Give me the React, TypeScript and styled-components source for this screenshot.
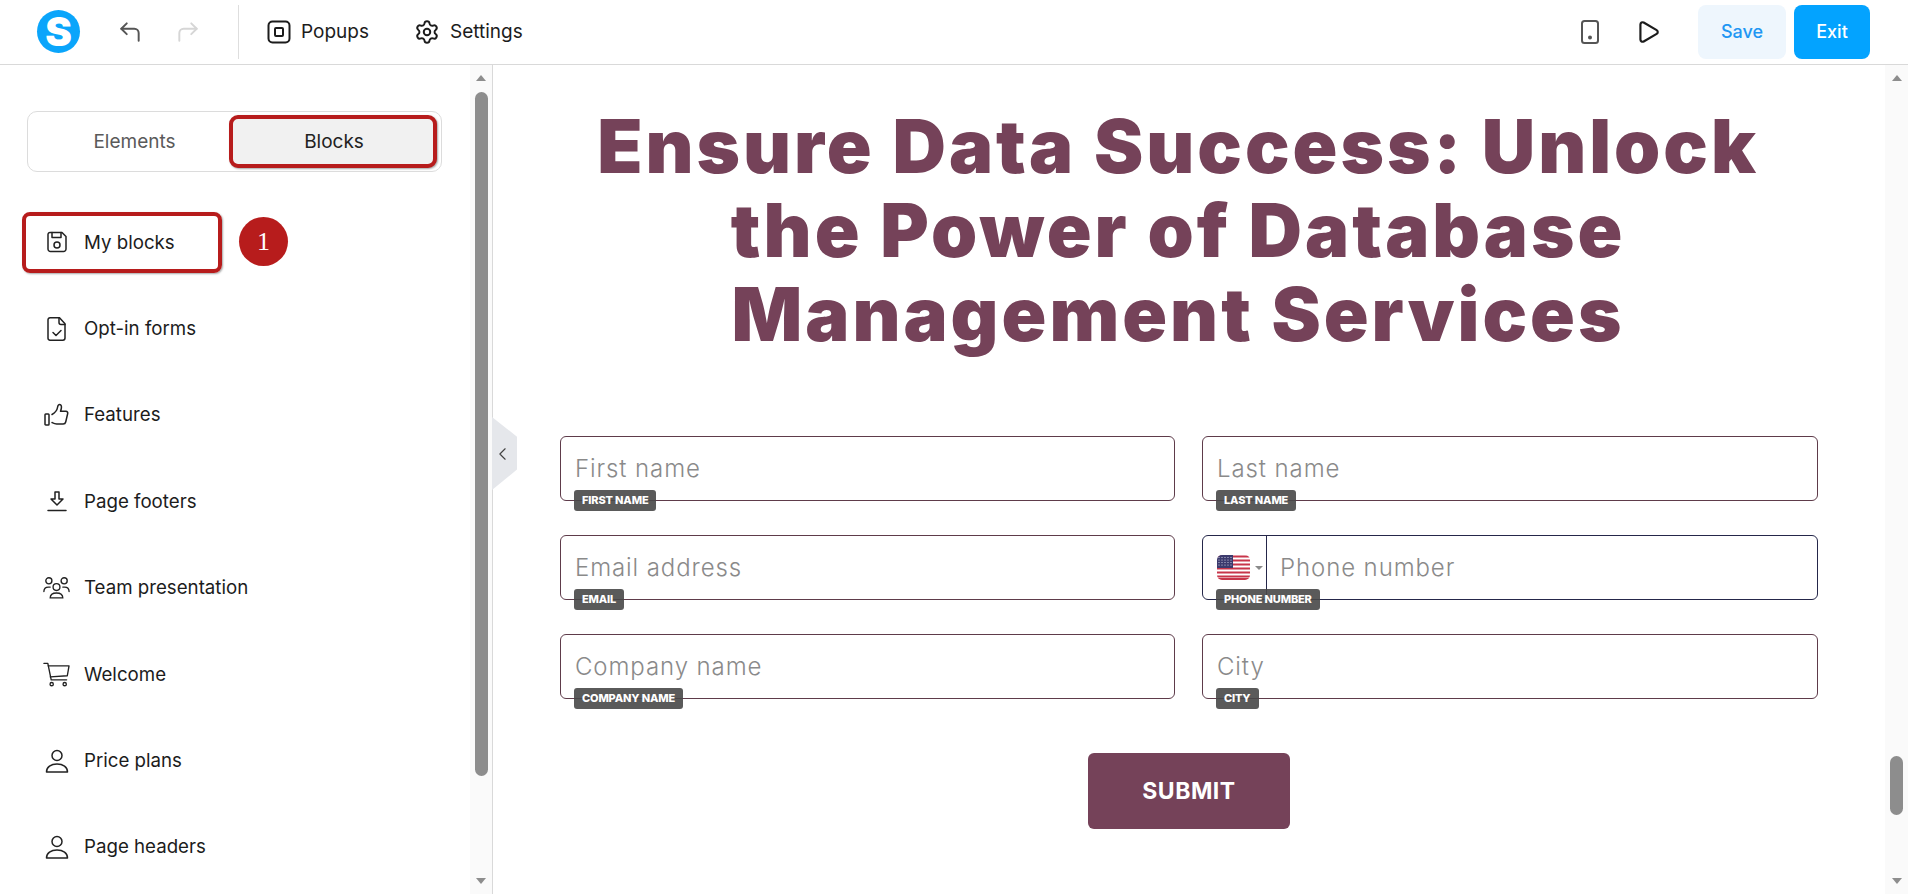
import React from "react";
import styled, { createGlobalStyle } from "styled-components";
import { CornerUpLeft, CornerUpRight, Play, Settings, ChevronLeft } from "lucide-react";

const Global = createGlobalStyle`
  html, body { margin: 0; padding: 0; height: 100%; background: #fff; overflow: hidden; }
  * { box-sizing: border-box; }
  body { font-family: Inter, "Liberation Sans", sans-serif; color: #1c1c1c; }
`;

const Page = styled.div`
  width: 1908px;
  height: 894px;
  display: flex;
  flex-direction: column;
`;

const Topbar = styled.header`
  height: 65px;
  flex: none;
  display: flex;
  align-items: center;
  border-bottom: 1px solid #d9d9d9;
  padding: 0 38px 1px 37px;
`;

const Logo = styled.div`
  width: 43px;
  height: 43px;
  border-radius: 50%;
  background: #0aa5fb;
  color: #fff;
  font-size: 40px;
  font-weight: 900;
  display: flex;
  align-items: center;
  justify-content: center;
  margin-right: 37px;
`;

const HistoryButton = styled.span<{ $off?: boolean }>`
  display: flex;
  width: 28px;
  margin-right: 30px;
  color: ${({ $off }) => ($off ? "#d6d6d6" : "#555")};
`;

const Divider = styled.span`
  width: 1px;
  height: 54px;
  background: #dedede;
  margin: 0 28px 0 5px;
`;

const NavItem = styled.span`
  display: flex;
  align-items: center;
  gap: 10px;
  font-size: 19px;
  font-weight: 400;
  margin-right: 45px;
`;

const Spacer = styled.span`
  flex: 1;
`;

const ToolIcon = styled.span<{ $gap: number }>`
  display: flex;
  margin-right: ${({ $gap }) => $gap}px;
`;

const TopButton = styled.button<{ $primary?: boolean }>`
  height: 54px;
  width: ${({ $primary }) => ($primary ? "76px" : "88px")};
  margin-left: ${({ $primary }) => ($primary ? "8px" : "0")};
  border: 0;
  border-radius: 8px;
  font: 500 18px Inter, sans-serif;
  background: ${({ $primary }) => ($primary ? "#03a3ff" : "#eef6fd")};
  color: ${({ $primary }) => ($primary ? "#fff" : "#2196f3")};
`;

const Body = styled.div`
  flex: 1;
  display: flex;
  min-height: 0;
`;

const Sidebar = styled.aside`
  width: 493px;
  flex: none;
  display: flex;
  border-right: 1px solid #d9d9d9;
  position: relative;
`;

const SidebarContent = styled.div`
  flex: 1;
  min-width: 0;
  padding: 46px 0 0 27px;
  overflow: hidden;
`;

const Tabs = styled.div`
  width: 415px;
  height: 61px;
  border: 1px solid #dcdcdc;
  border-radius: 10px;
  display: flex;
  align-items: center;
  padding: 0 4px 0 12px;
`;

const Tab = styled.div<{ $active?: boolean }>`
  height: 53px;
  display: flex;
  align-items: center;
  justify-content: center;
  font-size: 19px;
  ${({ $active }) =>
    $active
      ? "width: 208px; padding-left: 2px; background: #f1f1f1; border: 4px solid #b71c1c; border-radius: 9px; color: #222; box-shadow: 1px 1px 2px rgba(0, 0, 0, 0.35);"
      : "flex: 1; color: #5a5a5a;"}
`;

const BlockList = styled.ul`
  list-style: none;
  margin: 27px 0 0;
  padding: 0;
`;

const BlockItem = styled.li`
  height: 86.4px;
  display: flex;
  align-items: center;
  gap: 14px;
  padding-left: 16px;
  font-size: 18.7px;
  position: relative;
`;

const BlockIcon = styled.span`
  width: 27px;
  height: 28px;
  display: flex;
  align-items: center;
  justify-content: center;
  flex: none;
`;

const Annotation = styled.span`
  position: absolute;
  left: -5px;
  top: 13px;
  width: 200px;
  height: 61px;
  border: 4px solid #b71c1c;
  border-radius: 8px;
  box-shadow: 1px 1px 2px rgba(0, 0, 0, 0.35);
`;

const StepBadge = styled.span`
  position: absolute;
  left: 212px;
  top: 18px;
  width: 49px;
  height: 49px;
  border-radius: 50%;
  background: #b71c1c;
  color: #fff;
  font: 26px "Liberation Serif", serif;
  display: flex;
  align-items: center;
  justify-content: center;
`;

const ScrollTrack = styled.div<{ $width: number }>`
  width: ${({ $width }) => $width}px;
  flex: none;
  background: #fafafa;
  display: flex;
  flex-direction: column;
  align-items: center;
`;

const ScrollArrow = styled.span<{ $down?: boolean }>`
  width: 0;
  height: 0;
  flex: none;
  border-left: 5px solid transparent;
  border-right: 5px solid transparent;
  margin: ${({ $down }) => ($down ? "0 0 10px" : "10px 0 0")};
  ${({ $down }) =>
    $down ? "border-top: 6px solid #8d8d8d;" : "border-bottom: 6px solid #8d8d8d;"}
`;

const ScrollThumb = styled.span<{ $top: number; $height: number }>`
  width: 13px;
  height: ${({ $height }) => $height}px;
  margin-top: ${({ $top }) => $top}px;
  margin-bottom: auto;
  border-radius: 7px;
  background: #8d8d8d;
`;

const CollapseHandle = styled.div`
  position: absolute;
  left: 492px;
  top: 352px;
  width: 25px;
  height: 73px;
  background: #e5e7eb;
  clip-path: polygon(0 0, 100% 27%, 100% 72%, 0 100%);
  display: flex;
  align-items: center;
  justify-content: center;
  padding-right: 4px;
  color: #444;
  z-index: 2;
`;

const Canvas = styled.main`
  flex: 1;
  min-width: 0;
  padding: 39px 67px 0;
  overflow: hidden;
`;

const Headline = styled.h1`
  margin: 0 22px 0 0;
  font-size: 74px;
  font-weight: 900;
  line-height: 84px;
  text-align: center;
  color: #754259;
  letter-spacing: 3px;
  white-space: nowrap;
`;

const FormGrid = styled.form`
  margin-top: 80px;
  display: grid;
  grid-template-columns: 615px 616px;
  column-gap: 27px;
  row-gap: 34px;
`;

const Field = styled.div<{ $phone?: boolean }>`
  height: 65px;
  border: 1px solid ${({ $phone }) => ($phone ? "#25274a" : "#5e3b4a")};
  border-radius: 6px;
  display: flex;
  align-items: center;
  position: relative;
`;

const Placeholder = styled.span<{ $phone?: boolean }>`
  margin-left: ${({ $phone }) => ($phone ? "13px" : "14px")};
  font-size: 24px;
  font-weight: 300;
  letter-spacing: 0.9px;
  color: #8a8a8a;
`;

const FieldLabel = styled.span`
  position: absolute;
  left: 13px;
  bottom: -11px;
  height: 21px;
  padding: 0 8px;
  border-radius: 3px;
  background: rgba(72, 72, 72, 0.9);
  color: #fff;
  font-size: 11px;
  font-weight: 800;
  line-height: 21px;
  letter-spacing: -0.15px;
  white-space: nowrap;
`;

const CountryPicker = styled.span`
  width: 64px;
  align-self: stretch;
  flex: none;
  border-right: 1px solid #25274a;
  display: flex;
  align-items: center;
  gap: 5px;
  padding-left: 14px;
`;

const Caret = styled.span`
  width: 0;
  height: 0;
  border-left: 4px solid transparent;
  border-right: 4px solid transparent;
  border-top: 4px solid #8a8a8a;
`;

const SubmitRow = styled.div`
  margin-top: 54px;
  display: flex;
  justify-content: center;
`;

const SubmitButton = styled.button`
  width: 202px;
  height: 76px;
  border: 0;
  border-radius: 6px;
  background: #754259;
  color: #fff;
  font: 700 23px Inter, sans-serif;
  letter-spacing: 0.5px;
`;

const icon = {
  width: 24,
  height: 24,
  viewBox: "0 0 24 24",
  fill: "none",
  stroke: "#222",
  strokeWidth: 1.5,
  strokeLinecap: "round" as const,
  strokeLinejoin: "round" as const,
};

const FloppyIcon = () => (
  <svg {...icon}>
    <path d="M5 2.5h12l4 4V19a2.5 2.5 0 0 1-2.5 2.5h-13A2.5 2.5 0 0 1 3 19V4.5a2 2 0 0 1 2-2Z" />
    <path d="M7 2.5v5h9v-5" />
    <circle cx="12" cy="15" r="3" />
  </svg>
);

const FormIcon = () => (
  <svg {...icon}>
    <path d="M5 .8h9.5l5.5 6V21a2.2 2.2 0 0 1-2.2 2.2H5A2 2 0 0 1 3 21V2.8a2 2 0 0 1 2-2Z" />
    <path d="M14 1v4.5a2 2 0 0 0 2 2h4" />
    <path d="m8 15.5 3 3 5-5" />
  </svg>
);

const ThumbIcon = () => (
  <svg width="25" height="23" viewBox="0 0 25 23" fill="none" stroke="#222" strokeWidth="1.5" strokeLinecap="round" strokeLinejoin="round">
    <rect x="1" y="11" width="4" height="11" rx="0.8" />
    <path d="M8 11.5c2.5-1.5 5-3.5 5.5-7 .2-1.5.8-3 2.2-3 1.6 0 2 2 1.6 4-.2 1-.5 2-.8 2.8h5.5c1.2 0 2 1 1.7 2.2l-2 8.5c-.3 1.300-1.300 2-2.500 2h-6.500c-2 0-3.200-.7-4.700-1.500" />
  </svg>
);

const DownloadIcon = () => (
  <svg {...icon}>
    <path d="M10 3h4v7h4l-6 6-6-6h4V3Z" />
    <path d="M3 21.5h18" />
  </svg>
);

const TeamIcon = () => (
  <svg width="31" height="26" viewBox="0 0 30 26" fill="none" stroke="#222" strokeWidth="1.5" strokeLinecap="round">
    <circle cx="6.5" cy="5" r="3.4" />
    <circle cx="23.5" cy="5" r="3.4" />
    <circle cx="15" cy="12" r="3.8" />
    <path d="M1 17c0-3 2-5 5-5h2" />
    <path d="M29 17c0-3-2-5-5-5h-2" />
    <path d="M8 24c0-3.5 3-5.5 7-5.5s7 2 7 5.5Z" />
  </svg>
);

const CartIcon = () => (
  <svg width="28" height="25" viewBox="0 0 28 25" fill="none" stroke="#222" strokeWidth="1.4" strokeLinecap="round" strokeLinejoin="round">
    <path d="M1 1h4l3.5 17h16" />
    <path d="M5.4 3.5H27l-1.800 10.300L7.600 15" />
    <circle cx="9" cy="22.5" r="1.7" />
    <circle cx="22.5" cy="22.5" r="1.7" />
  </svg>
);

const PersonIcon = () => (
  <svg {...icon}>
    <circle cx="12" cy="6.5" r="5" />
    <path d="M1.5 23c0-5 4.5-8 10.5-8s10.5 3 10.5 8Z" />
  </svg>
);

const PopupIcon = () => (
  <svg width="24" height="24" viewBox="0 0 24 24" fill="none" stroke="#1c1c1c" strokeWidth="2">
    <rect x="1.5" y="1.5" width="21" height="21" rx="4" />
    <rect x="8" y="8" width="8" height="8" rx="1" />
  </svg>
);

const DeviceIcon = () => (
  <svg width="20" height="26" viewBox="0 0 20 26" fill="none" stroke="#555" strokeWidth="2">
    <rect x="2" y="2" width="16" height="22" rx="2.5" />
    <circle cx="10" cy="18.5" r="1" fill="#555" />
  </svg>
);

const UsFlag = () => (
  <svg width="33" height="25" viewBox="0 0 33 25">
    <defs>
      <clipPath id="flagClip">
        <rect width="33" height="25" rx="5" />
      </clipPath>
    </defs>
    <g clipPath="url(#flagClip)">
      <rect width="33" height="25" fill="#fff" />
      {[0, 4, 8, 12, 16, 20].map((y) => (
        <rect key={y} y={y + 0.5} width="33" height="2" fill="#c8354a" />
      ))}
      <rect y="23" width="33" height="2" fill="#c8354a" />
      <rect width="16" height="13" fill="#3c3b6e" />
      {[2.5, 5, 7.5, 10].map((y) =>
        [2, 5, 8, 11, 14].map((x) => (
          <circle key={`${x}-${y}`} cx={x} cy={y} r="0.6" fill="#d8d8ea" />
        ))
      )}
    </g>
  </svg>
);

const blocks: { name: string; icon: React.ReactNode }[] = [
  { name: "My blocks", icon: <FloppyIcon /> },
  { name: "Opt-in forms", icon: <FormIcon /> },
  { name: "Features", icon: <ThumbIcon /> },
  { name: "Page footers", icon: <DownloadIcon /> },
  { name: "Team presentation", icon: <TeamIcon /> },
  { name: "Welcome", icon: <CartIcon /> },
  { name: "Price plans", icon: <PersonIcon /> },
  { name: "Page headers", icon: <PersonIcon /> },
];

const fields = [
  { placeholder: "First name", label: "FIRST NAME" },
  { placeholder: "Last name", label: "LAST NAME" },
  { placeholder: "Email address", label: "EMAIL" },
  { placeholder: "Phone number", label: "PHONE NUMBER", phone: true },
  { placeholder: "Company name", label: "COMPANY NAME" },
  { placeholder: "City", label: "CITY" },
];

export default function App() {
  return (
    <Page>
      <Global />
      <Topbar>
        <Logo>S</Logo>
        <HistoryButton>
          <CornerUpLeft size={26} strokeWidth={1.8} />
        </HistoryButton>
        <HistoryButton $off>
          <CornerUpRight size={26} strokeWidth={1.8} />
        </HistoryButton>
        <Divider />
        <NavItem>
          <PopupIcon />
          Popups
        </NavItem>
        <NavItem>
          <Settings size={26} strokeWidth={1.8} />
          Settings
        </NavItem>
        <Spacer />
        <ToolIcon $gap={35}>
          <DeviceIcon />
        </ToolIcon>
        <ToolIcon $gap={37}>
          <Play size={26} strokeWidth={2} color="#1c1c1c" />
        </ToolIcon>
        <TopButton>Save</TopButton>
        <TopButton $primary>Exit</TopButton>
      </Topbar>
      <Body>
        <Sidebar>
          <SidebarContent>
            <Tabs>
              <Tab>Elements</Tab>
              <Tab $active>Blocks</Tab>
            </Tabs>
            <BlockList>
              {blocks.map((block, index) => (
                <BlockItem key={block.name}>
                  <BlockIcon>{block.icon}</BlockIcon>
                  {block.name}
                  {index === 0 && (
                    <>
                      <Annotation />
                      <StepBadge>1</StepBadge>
                    </>
                  )}
                </BlockItem>
              ))}
            </BlockList>
          </SidebarContent>
          <ScrollTrack $width={22}>
            <ScrollArrow />
            <ScrollThumb $top={11} $height={684} />
            <ScrollArrow $down />
          </ScrollTrack>
          <CollapseHandle>
            <ChevronLeft size={32} strokeWidth={1.3} />
          </CollapseHandle>
        </Sidebar>
        <Canvas>
          <Headline>
            Ensure Data Success: Unlock
            <br />
            the Power of Database
            <br />
            Management Services
          </Headline>
          <FormGrid>
            {fields.map((field) => (
              <Field key={field.label} $phone={field.phone}>
                {field.phone && (
                  <CountryPicker>
                    <UsFlag />
                    <Caret />
                  </CountryPicker>
                )}
                <Placeholder $phone={field.phone}>{field.placeholder}</Placeholder>
                <FieldLabel>{field.label}</FieldLabel>
              </Field>
            ))}
          </FormGrid>
          <SubmitRow>
            <SubmitButton type="button">SUBMIT</SubmitButton>
          </SubmitRow>
        </Canvas>
        <ScrollTrack $width={23}>
          <ScrollArrow />
          <ScrollThumb $top={675} $height={59} />
          <ScrollArrow $down />
        </ScrollTrack>
      </Body>
    </Page>
  );
}
